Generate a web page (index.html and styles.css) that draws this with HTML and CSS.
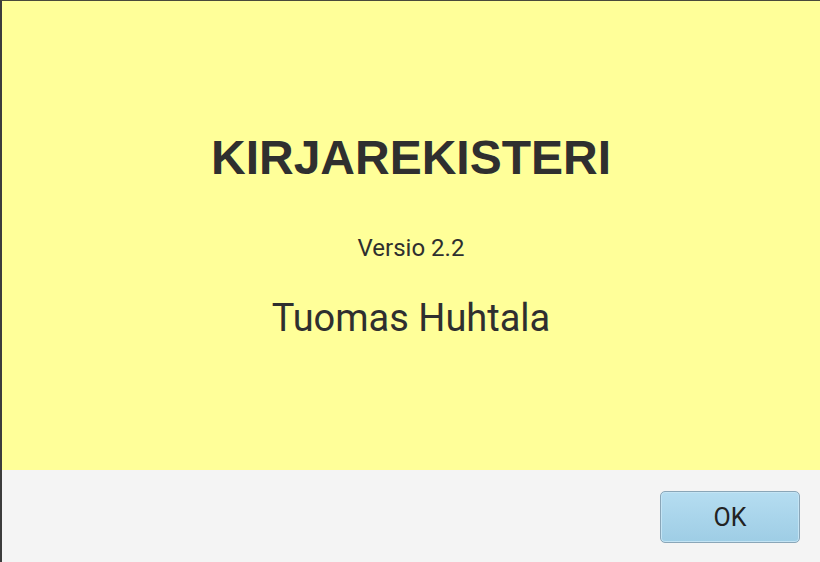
FILE: index.html
```html
<!DOCTYPE html>
<html>
<head>
<meta charset="utf-8">
<link rel="stylesheet" href="styles.css">
</head>
<body>
<div class="dialog">
  <div class="content">
    <h1 class="title">KIRJAREKISTERI</h1>
    <div class="version">Versio 2.2</div>
    <div class="author">Tuomas Huhtala</div>
  </div>
  <div class="footer">
    <button class="ok">OK</button>
  </div>
</div>
</body>
</html>
```
FILE: styles.css
```css
html, body {
  margin: 0;
  padding: 0;
  width: 820px;
  height: 562px;
  overflow: hidden;
}
.dialog {
  box-sizing: border-box;
  width: 820px;
  height: 562px;
  border-top: 1px solid #4a4a3a;
  border-left: 2px solid #3c3c3c;
  display: flex;
  flex-direction: column;
  font-family: Roboto, "Liberation Sans", sans-serif;
  color: #2f2f2f;
}
.content {
  height: 469px;
  background: #ffff99;
  display: flex;
  flex-direction: column;
  align-items: center;
  box-sizing: border-box;
  padding-top: 129px;
}
.title {
  margin: 0;
  font-family: "Liberation Sans", Arial, sans-serif;
  font-weight: bold;
  font-size: 48px;
  line-height: 56px;
}
.version {
  margin-top: 48px;
  font-size: 24px;
  line-height: 28px;
}
.author {
  margin-top: 34px;
  font-size: 38px;
  line-height: 44px;
}
.footer {
  flex: 1;
  background: #f4f4f4;
  display: flex;
  justify-content: flex-end;
  align-items: flex-start;
  padding: 21px 20px 0 0;
}
.ok {
  width: 140px;
  height: 52px;
  border: 1px solid #8aa6b8;
  border-radius: 5px;
  background: linear-gradient(#b5ddf1, #9ecde5);
  box-shadow: inset 0 0 0 1px #c4e4f4;
  font-family: Roboto, "Liberation Sans", sans-serif;
  font-size: 25px;
  color: #222;
  padding: 0;
}
```
